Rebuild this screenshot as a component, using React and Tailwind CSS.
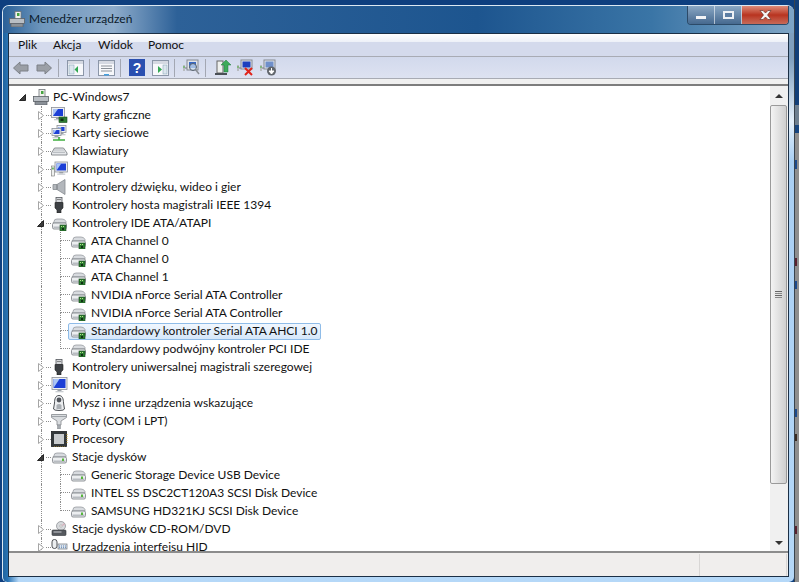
const F = { fontFamily: 'Lato,"Noto Sans",sans-serif' };

const Arrow = ({ open }) =>
  open ? (
    <svg width="7" height="7" viewBox="0 0 7 7"><path d="M6.5 .5V6.5H.5Z" fill="#3c3c3c" stroke="#262626" /></svg>
  ) : (
    <svg width="6" height="9" viewBox="0 0 6 9"><path d="M.5 .5L5.5 4.5L.5 8.5Z" fill="#fff" stroke="#a6a6a6" /></svg>
  );

const Chip = () => (
  <g>
    <rect x="9" y="10" width="6" height="6" fill="#2f7d32" stroke="#174a1c" strokeWidth=".6" />
    <rect x="10" y="11" width="1" height="1" fill="#b5e68a" />
    <rect x="12" y="11" width="1" height="1" fill="#b5e68a" />
    <rect x="11" y="13" width="2" height="2" fill="#0f3013" />
  </g>
);
const Drive = ({ led = false }) => (
  <g>
    <path d="M3 6.5Q3 4 6 4H11Q14 4 15 6.5V8H2Z" fill="#d8dbdf" stroke="#8c9096" strokeWidth=".7" />
    <rect x="1.5" y="8" width="14" height="6" rx="1.5" fill="#eceef0" stroke="#777b80" strokeWidth=".8" />
    <rect x="2.5" y="11.5" width="12" height="1.5" fill="#b8bcc1" />
    {led && <rect x="11" y="9.5" width="2" height="2.5" fill="#55b53a" />}
  </g>
);
const Screen = ({ x = 2, y = 1, w = 12, h = 9 }) => (
  <g>
    <rect x={x} y={y} width={w} height={h} fill="#eef0f2" stroke="#8a9098" strokeWidth=".8" />
    <rect x={x + 1.5} y={y + 1.5} width={w - 3} height={h - 3} fill="#1c3fd6" />
    <path d={`M${x + 1.5} ${y + 1.5}H${x + w / 2}L${x + 1.5} ${y + h - 1.5}Z`} fill="#a9c4f4" />
    <rect x={x + w / 2 - 2} y={y + h} width="4" height="1.5" fill="#9aa0a6" />
    <rect x={x + w / 2 - 4} y={y + h + 1.5} width="8" height="1.3" fill="#c9cdd2" />
  </g>
);

const DeviceIcon = ({ t }) => {
  const inner = {
    pc: (
      <g>
        <rect x="7" y="0.5" width="6" height="8" fill="#f1f2ee" stroke="#70757a" strokeWidth=".8" />
        <rect x="9" y="2" width="2.5" height="3" fill="#46a341" />
        <rect x="1.5" y="7.5" width="15" height="5" fill="#b9bec4" stroke="#5d6268" strokeWidth=".8" />
        <rect x="3" y="12.5" width="12" height="3.5" fill="#8a9097" stroke="#5d6268" strokeWidth=".7" />
      </g>
    ),
    gpu: (
      <g>
        <Screen x={0.5} y={0.5} w={13} h={10} />
        <rect x="8" y="10" width="8" height="5.5" fill="#2f7d32" stroke="#174a1c" strokeWidth=".6" />
        <rect x="9.5" y="11.5" width="3" height="2.5" fill="#0f3013" />
      </g>
    ),
    net: (
      <g>
        <Screen x={6} y={0.5} w={9} h={7} />
        <Screen x={1} y={3.5} w={9} h={7} />
        <path d="M2 15H14M8 12V15" stroke="#3fae3f" strokeWidth="1.6" />
      </g>
    ),
    kb: (
      <g>
        <path d="M.5 10L3.5 5H12.5L16 10V12H.5Z" fill="#e6e8eb" stroke="#70757a" strokeWidth=".8" />
        <path d="M3.5 7H12.5M2.5 9.3H14" stroke="#8f949a" strokeWidth="1.2" strokeDasharray="1 1" />
      </g>
    ),
    comp: (
      <g>
        <rect x="0.5" y="5" width="3" height="10" fill="#eef0ee" stroke="#777" strokeWidth=".6" />
        <rect x="1.2" y="6.5" width="1.5" height="2" fill="#48a83f" />
        <Screen x={4} y={1} w={12.5} h={10} />
      </g>
    ),
    snd: (
      <g>
        <path d="M2 5.5H6L14 0.5V15.5L6 10.5H2Z" fill="#b3b7bc" stroke="#868b91" strokeWidth=".8" />
        <path d="M6 5.5V10.5" stroke="#70757a" />
      </g>
    ),
    usb: (
      <g>
        <rect x="5" y="0.5" width="6" height="5" fill="#d5d7da" stroke="#55595e" strokeWidth=".8" />
        <rect x="6.5" y="2" width="1" height="1" fill="#333" />
        <rect x="8.5" y="2" width="1" height="1" fill="#333" />
        <path d="M4 5.5H12V11L10 13V16H6V13L4 11Z" fill="#3d4044" stroke="#222" strokeWidth=".6" />
      </g>
    ),
    ide: (
      <g>
        <Drive />
        <Chip />
      </g>
    ),
    mon: <Screen x={1} y={0.5} w={15} h={12} />,
    mouse: (
      <g>
        <path d="M8 0.5C4.5 0.5 3.5 4 3.5 8L2.5 14Q3 15.5 8 15.5T13.5 14L12.5 8C12.5 4 11.5 .5 8 .5Z" fill="#eceef0" stroke="#3b3f44" strokeWidth=".9" />
        <circle cx="8" cy="5" r="2.4" fill="#50545a" />
        <path d="M5.5 10Q8 8 10.5 10V14H5.5Z" fill="#a9aeb3" />
      </g>
    ),
    port: (
      <g>
        <path d="M.5 1.5H15.5V4.5L10 8V12H6V8L.5 4.5Z" fill="#d9dcdf" stroke="#85898e" strokeWidth=".8" />
        <path d="M1 3.5H15" stroke="#9ea3a8" />
        <rect x="6.5" y="12" width="3" height="4" fill="#a6abb0" stroke="#85898e" strokeWidth=".5" />
      </g>
    ),
    cpu: (
      <g>
        <rect x=".5" y=".5" width="15" height="15" fill="#33383b" stroke="#1c1f21" strokeWidth=".8" />
        <rect x="3" y="3" width="10" height="10" fill="#c8cbce" />
        <path d="M16 3V13" stroke="#c29a2b" strokeDasharray="1 1" />
        <path d="M3 16H15" stroke="#c29a2b" strokeDasharray="1 1" />
      </g>
    ),
    disk: <Drive led />,
    cd: (
      <g>
        <circle cx="10" cy="5" r="4.5" fill="#d8dadd" stroke="#84888d" strokeWidth=".7" />
        <circle cx="10" cy="5" r="1.2" fill="#fff" stroke="#888" strokeWidth=".5" />
        <path d="M10 5L13 2L14 4Z" fill="#d9b2bd" />
        <rect x="1" y="9" width="14" height="5.5" rx="1" fill="#55595e" stroke="#33363a" strokeWidth=".6" />
        <rect x="2.5" y="10.5" width="8" height="1" fill="#c9ccd0" />
      </g>
    ),
    hid: (
      <g>
        <rect x="1" y="0.5" width="5" height="9" rx="2.4" fill="#eceef0" stroke="#3d4044" strokeWidth=".9" />
        <rect x="7" y="5" width="9" height="5" fill="#dfe6ee" stroke="#6d7278" strokeWidth=".7" />
        <path d="M8 7H15M8 8.7H15" stroke="#5e84b4" strokeDasharray="1 1" />
      </g>
    ),
  }[t];
  return (
    <svg width="17" height="16" viewBox="0 0 17 16" className="shrink-0">
      {inner}
    </svg>
  );
};

const Dot = "border-dotted border-[#8d8d8d]";

const RootRow = () => (
  <div className="flex h-[18px] items-center">
    <div className="flex h-full w-[19px] shrink-0 items-center justify-center"><Arrow open /></div>
    <div className="flex h-full w-[18px] shrink-0 items-center"><DeviceIcon t="pc" /></div>
    <span className="ml-[3px] px-0 text-[12px] text-[#111]">PC-Windows7</span>
  </div>
);

const TopRow = ({ icon, text, open }) => (
  <div className="flex h-[18px] items-center">
    <div className="flex h-full w-[19px] shrink-0 flex-col">
      <div className={`ml-[9px] h-full border-l ${Dot}`} />
    </div>
    <div className="-ml-[19px] flex h-full w-[19px] shrink-0 items-center">
      <div className="z-10 flex w-[19px] items-center justify-center pr-[2px]"><Arrow open={open} /></div>
    </div>
    <div className={`-ml-[5px] w-[5px] shrink-0 border-t ${Dot}`} />
    <DeviceIcon t={icon} />
    <span className="ml-[4px] text-[12px] whitespace-nowrap text-[#111]">{text}</span>
  </div>
);

const SubRow = ({ icon, text, last, selected }) => (
  <div className="flex h-[18px] items-center">
    <div className={`ml-[9px] h-full w-[10px] shrink-0 border-l ${Dot}`} />
    <div className="flex h-full w-[19px] shrink-0 flex-col">
      <div className={`ml-[9px] h-[9px] border-b border-l ${Dot}`} />
      {!last && <div className={`ml-[9px] h-[9px] border-l ${Dot}`} />}
    </div>
    {selected ? (
      <div className="-ml-[2px] flex h-[17px] items-center rounded-[2px] border border-[#8fbce8] bg-gradient-to-b from-[#f1f7fe] to-[#d5e7fa] pl-[1px] pr-[2px]">
        <DeviceIcon t={icon} />
        <span className="ml-[4px] text-[12px] whitespace-nowrap text-[#111]">{text}</span>
      </div>
    ) : (
      <>
        <DeviceIcon t={icon} />
        <span className="ml-[4px] text-[12px] whitespace-nowrap text-[#111]">{text}</span>
      </>
    )}
  </div>
);

const TbSep = ({ first }) => <div className={`${first ? "ml-[6px]" : "ml-[5px]"} mr-[8px] h-[18px] w-px shrink-0 bg-[#a3a7b2]`} />;

const Win = ({ children }) => (
  <svg width="17" height="16" viewBox="0 0 17 16">
    <rect x=".5" y=".5" width="16" height="15" fill="#f7f8fb" stroke="#8b96a8" />
    <rect x="1" y="1" width="15" height="3" fill="#d5d9e2" />
    {children}
  </svg>
);
const Conn = () => (
  <g>
    <rect x="0" y="6" width="2" height="6" fill="#b9bcc0" />
    <rect x=".5" y="7" width="1" height="2" fill="#4cae41" />
    <path d="M2 9H4" stroke="#777" />
  </g>
);
const Nav = ({ d }) => (
  <svg width="16" height="14" viewBox="0 0 16 14"><path d={d} fill="#9b9fa6" stroke="#7c8087" /></svg>
);

const Btn = ({ children, w, cls }) => (
  <div className={`flex h-full items-center justify-center border-r border-[#ffffff90] ${w} ${cls}`}>{children}</div>
);

const TOP1 = [
  ["gpu", "Karty graficzne"],
  ["net", "Karty sieciowe"],
  ["kb", "Klawiatury"],
  ["comp", "Komputer"],
  ["snd", "Kontrolery dźwięku, wideo i gier"],
  ["usb", "Kontrolery hosta magistrali IEEE 1394"],
];
const IDE = [
  "ATA Channel 0",
  "ATA Channel 0",
  "ATA Channel 1",
  "NVIDIA nForce Serial ATA Controller",
  "NVIDIA nForce Serial ATA Controller",
  "Standardowy kontroler Serial ATA AHCI 1.0",
  "Standardowy podwójny kontroler PCI IDE",
];
const TOP2 = [
  ["usb", "Kontrolery uniwersalnej magistrali szeregowej"],
  ["mon", "Monitory"],
  ["mouse", "Mysz i inne urządzenia wskazujące"],
  ["port", "Porty (COM i LPT)"],
  ["cpu", "Procesory"],
];
const DISKS = [
  "Generic Storage Device USB Device",
  "INTEL SS DSC2CT120A3 SCSI Disk Device",
  "SAMSUNG HD321KJ SCSI Disk Device",
];

export default function App() {
  return (
    <div style={F} className="flex h-[582px] w-[799px] overflow-hidden bg-[#0e3f7f] pl-[2px] pt-[5px]">
      <div className="flex min-w-0 flex-1 flex-col rounded-t-[7px] rounded-b-[5px] border-t border-l border-[#dce8f2] bg-[linear-gradient(90deg,#1f639f_0%,#2a74b4_0.6%,#00000000_2%),linear-gradient(180deg,#7f9fbe_0%,#7f9fbe_9%,#e4f0fb_20%,#a9cff3_27%,#b5d8f8_100%)] pb-[5px]">
        <div className="flex h-[27px] shrink-0 items-start rounded-t-[6px] bg-[linear-gradient(90deg,#2a6098_0%,#6f97bd_5%,#8eaccb_14%,#2d6198_22%,#1d558f_60%,#3a75a6_82%,#7fa5c6_100%)] px-[5px]">
          <div className="mt-[4px] flex items-center">
            <DeviceIcon t="pc" />
            <span className="ml-[4px] text-[12px] text-[#0b1a2a]">Menedżer urządzeń</span>
          </div>
          <div className="ml-auto flex h-[19px] overflow-hidden rounded-b-[4px] border border-t-0 border-[#2c4a68]">
            <Btn w="w-[27px]" cls="bg-gradient-to-b from-[#8aa7c4] to-[#46698f]"><div className="mt-[5px] h-[3px] w-[10px] bg-[#f2f4f7]" /></Btn>
            <Btn w="w-[27px]" cls="bg-gradient-to-b from-[#8aa7c4] to-[#46698f]"><div className="h-[8px] w-[11px] border-2 border-[#eef1f5] bg-[#5d7ea3]" /></Btn>
            <Btn w="w-[46px]" cls="border-r-0 bg-gradient-to-b from-[#dd8a78] via-[#b8331f] to-[#c86a58]">
              <svg width="13" height="10" viewBox="0 0 13 10"><path d="M1 .5H4L6.5 3L9 .5H12L8.5 5L12 9.5H9L6.5 7L4 9.5H1L4.5 5Z" fill="#f4f4f4" stroke="#5a2a22" strokeWidth=".6" /></svg>
            </Btn>
          </div>
        </div>
        <div className="mx-[5px] flex min-h-0 flex-1 flex-col border border-[#1b2f45] bg-[#f0f0f0]">
          <div className="flex h-[23px] shrink-0 items-center border-b border-[#a8abb4] bg-[linear-gradient(#ffffff_0%,#eef1f8_35%,#d4daec_36%,#d4daec_100%)] pl-[9px] text-[12px] text-[#111]">
            <span className="w-[35px]">Plik</span><span className="w-[45px]">Akcja</span><span className="w-[50px]">Widok</span><span>Pomoc</span>
          </div>
          <div className="flex h-[22px] shrink-0 items-center border-b border-[#a8abb4] bg-gradient-to-b from-[#d2d9ec] to-[#dde2f1] pl-[4px]">
            <Nav d="M.5 7L7 1V4H15V10H7V13Z" />
            <div className="w-[7px]" />
            <Nav d="M15.5 7L9 1V4H1V10H9V13Z" />
            <TbSep first />
            <Win><rect x="2" y="5" width="5" height="9" fill="#dce6ee" stroke="#7fa0b5" strokeWidth=".5" /><path d="M11 6V13L7.5 9.5Z" fill="#32a852" /></Win>
            <TbSep />
            <Win><path d="M3 6H14M3 8.5H14M3 11H14" stroke="#8a9098" /><rect x="6" y="14" width="5" height="1.5" fill="#45a0e0" /></Win>
            <TbSep />
            <svg width="16" height="17" viewBox="0 0 16 17"><rect width="16" height="17" fill="#2a4fb0" /><text x="8" y="13.5" textAnchor="middle" fontSize="14" fontWeight="700" fill="#fff" fontFamily="Liberation Sans">?</text></svg>
            <div className="w-[7px]" />
            <Win><path d="M6 6V13L10 9.5Z" fill="#32a852" /><rect x="11" y="5" width="4" height="9" fill="#dce6ee" stroke="#7fa0b5" strokeWidth=".5" /></Win>
            <TbSep />
            <svg width="17" height="17" viewBox="0 0 17 17"><Conn /><rect x="4" y="1" width="11" height="10" fill="#dfe3ea" stroke="#858a92" /><rect x="6" y="3" width="7" height="6" fill="#3567c4" /><circle cx="10" cy="8" r="3.5" fill="#cfe1f2" fillOpacity=".7" stroke="#55606c" /><path d="M12.5 10.5L16 15" stroke="#8a8f96" strokeWidth="1.5" /></svg>
            <TbSep />
            <svg className="ml-[1px]" width="17" height="17" viewBox="0 0 17 17"><rect x="2" y="2" width="6" height="12" fill="#eef0ee" stroke="#666" /><rect x="0" y="14" width="12" height="2" fill="#4a4f55" /><path d="M11 1L16 6H13V13H9V6H6Z" fill="#3eaa5a" stroke="#1f7a3a" strokeWidth=".5" /></svg>
            <div className="w-[5px]" />
            <svg width="17" height="17" viewBox="0 0 17 17"><Conn /><rect x="4" y="1" width="11" height="9" fill="#dfe3ea" stroke="#858a92" /><rect x="5.5" y="2.5" width="8" height="6" fill="#1d3fbe" /><path d="M8 9L15 16M15 9L8 16" stroke="#e0241b" strokeWidth="2" /></svg>
            <div className="w-[6px]" />
            <svg width="17" height="17" viewBox="0 0 17 17"><Conn /><rect x="4" y="1" width="11" height="9" fill="#dfe3ea" stroke="#858a92" /><rect x="5.5" y="2.5" width="8" height="6" fill="#6f8fca" /><circle cx="11.5" cy="12" r="4.5" fill="#60656b" /><path d="M11.5 9V14M9 12L11.5 15L14 12Z" fill="#fff" stroke="#fff" /></svg>
          </div>
          <div className="h-[7px] shrink-0 border-b-2 border-[#7d7d7d]" />
          <div className="flex min-h-0 flex-1 pl-[1px] pr-[1px]">
            <div className="min-w-0 flex-1 overflow-hidden bg-white pl-[3px] pt-[2px]">
              <RootRow />
              <div className="ml-[19px]">
                {TOP1.map(([i, t]) => <TopRow key={t} icon={i} text={t} />)}
                <TopRow icon="ide" text="Kontrolery IDE ATA/ATAPI" open />
                {IDE.map((t, n) => <SubRow key={n} icon="ide" text={t} last={n === 6} selected={n === 5} />)}
                {TOP2.map(([i, t]) => <TopRow key={t} icon={i} text={t} />)}
                <TopRow icon="disk" text="Stacje dysków" open />
                {DISKS.map((t, n) => <SubRow key={t} icon="disk" text={t} last={n === 2} />)}
                <TopRow icon="cd" text="Stacje dysków CD-ROM/DVD" />
                <TopRow icon="hid" text="Urządzenia interfejsu HID" />
              </div>
            </div>
            <div className="flex w-[17px] shrink-0 flex-col bg-[#f0f0f0]">
              <div className="flex h-[19px] shrink-0 items-center justify-center"><div className="h-0 w-0 border-x-[4px] border-b-[4px] border-x-transparent border-b-[#333]" /></div>
              <div className="flex h-[379px] shrink-0 flex-col items-center justify-center gap-[1px] rounded-[2px] border border-[#9a9a9a] bg-gradient-to-r from-[#f3f3f3] to-[#cfcfcf]">
                <div className="h-px w-[7px] bg-[#666]" /><div className="h-px w-[7px] bg-[#888]" /><div className="h-px w-[7px] bg-[#666]" /><div className="h-px w-[7px] bg-[#888]" />
              </div>
              <div className="flex-1" />
              <div className="flex h-[17px] shrink-0 items-center justify-center"><div className="h-0 w-0 border-x-[4px] border-t-[4px] border-x-transparent border-t-[#333]" /></div>
            </div>
          </div>
          <div className="flex h-[25px] shrink-0 border-t-2 border-[#8c8c8c] bg-[#f0eeed]">
            <div className="mt-[1px] w-[691px] border-r border-[#d8d6d5]" />
            <div className="mt-[1px] mr-[1px] flex-1 border-r border-[#d8d6d5]" />
          </div>
        </div>
      </div>
      <div className="relative -mt-[5px] flex w-[5px] shrink-0 flex-col border-l border-[#39434d]">
        <div className="h-[105px] shrink-0 bg-[#123f78]" />
        <div className="h-[20px] shrink-0 bg-[#6d7f90]" />
        <div className="h-[8px] shrink-0 bg-[#16457f]" />
        <div className="flex-1 bg-[#8e8e8e]" />
        <div className="absolute top-[160px] left-0 h-[9px] w-[2px] bg-[#1c4a8c]" />
        <div className="absolute top-[258px] left-0 h-[8px] w-[2px] bg-[#5a2230]" />
        <div className="absolute top-[281px] left-0 h-[8px] w-[2px] bg-[#1c4a8c]" />
        <div className="absolute top-[409px] left-0 h-[8px] w-[2px] bg-[#1c4a8c]" />
        <div className="absolute top-[434px] left-0 h-[7px] w-[2px] bg-[#3a2a20]" />
        <div className="absolute top-[526px] left-0 h-[8px] w-[2px] bg-[#5a2230]" />
      </div>
    </div>
  );
}
